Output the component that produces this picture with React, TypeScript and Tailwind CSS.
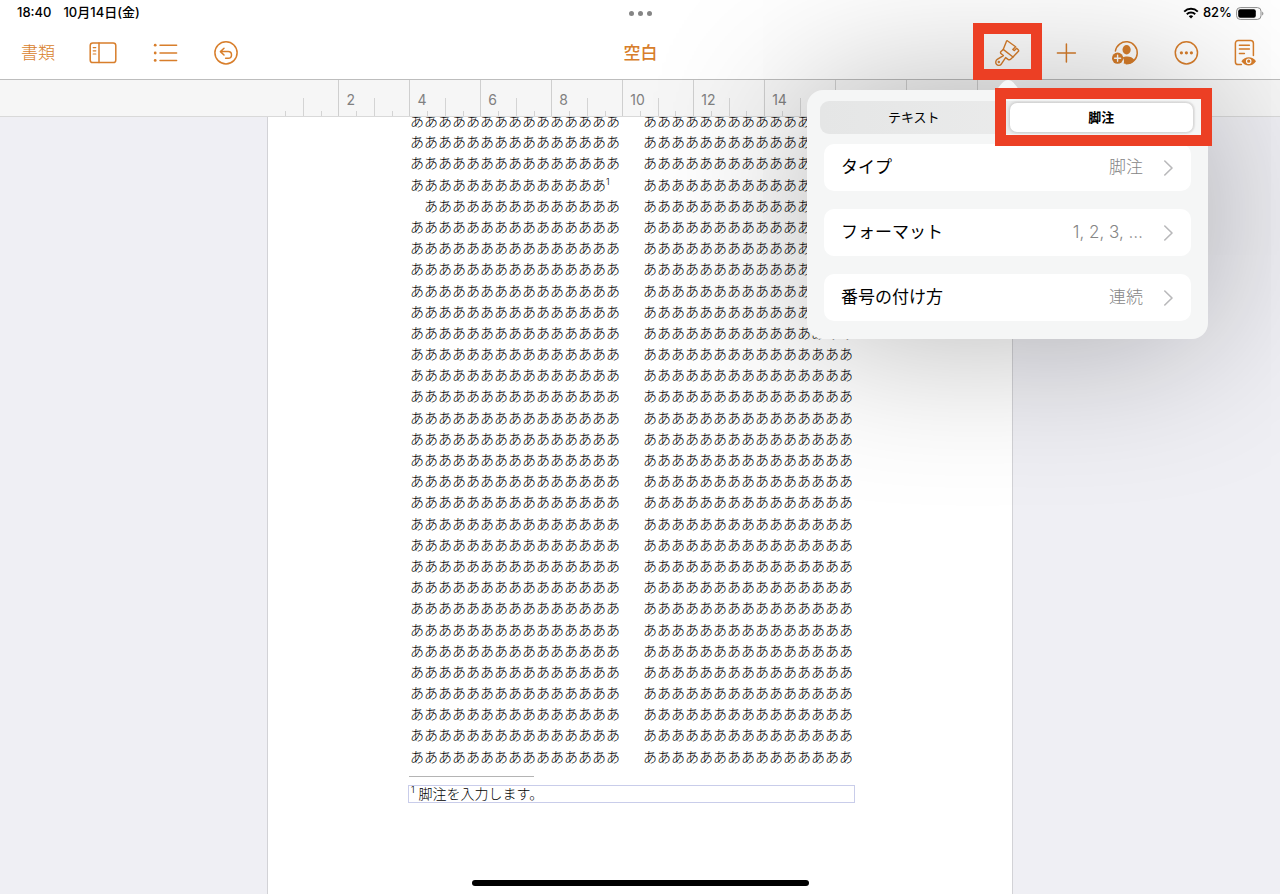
import { useState } from "react";
import type { ReactNode } from "react";

const CHAR = "あ";
const ROWS = 31;
const NOTE_ROW = 3;
const TICKS = Array.from({ length: 42 }, (_, i) => i);

function ToolButton({ label, children }: { label: string; children: ReactNode }) {
  return (
    <button type="button" aria-label={label} className="flex h-7 w-7 items-center justify-center">
      {children}
    </button>
  );
}

const line = {
  fill: "none",
  stroke: "currentColor",
  strokeWidth: 1.5,
  strokeLinecap: "round" as const,
  strokeLinejoin: "round" as const,
};

function SidebarIcon() {
  return (
    <svg viewBox="0 0 28 28" className="h-7 w-7" {...line}>
      <rect x="1.2" y="4" width="25.6" height="19.6" rx="2.6" />
      <path d="M10 4v19.6" />
      <path d="M4.2 8.6h2.6M4.2 11.8h2.6M4.2 15h2.6" strokeWidth="1.2" />
    </svg>
  );
}

function ListIcon() {
  return (
    <svg viewBox="0 0 28 28" className="h-7 w-7" {...line}>
      <path d="M9 6.2h16.6M9 14h16.6M9 21.4h16.6" />
      <g fill="currentColor" stroke="none">
        <circle cx="4.2" cy="6.2" r="1.4" />
        <circle cx="4.2" cy="14" r="1.4" />
        <circle cx="4.2" cy="21.4" r="1.4" />
      </g>
    </svg>
  );
}

function UndoIcon() {
  return (
    <svg viewBox="0 0 28 28" className="h-7 w-7" {...line}>
      <circle cx="13" cy="13.8" r="11.1" />
      <path d="M11 9.2L7.4 12.6L11 16M7.8 12.6h7.4a3.3 3.3 0 0 1 0 6.6h-2.6" />
    </svg>
  );
}

function BrushIcon() {
  return (
    <svg viewBox="0 0 28 28" className="h-7 w-7" {...line} strokeWidth="1.4">
      <path d="M16 2.2C15.4 1.6 14.8 1.6 14.4 2.4L11.2 10.4L21 18L26.2 12.6C26.8 12 26.8 11.4 26.2 10.8L24.6 9.2L22.4 11.6L20.8 10.4L23.6 7.8Z" />
      <path d="M11.2 10.4L9 12.4C8.2 13.2 8.4 14.2 9.2 14.8L11.4 16.6L5.6 20.2C3.6 21.4 3.2 23.6 4.4 25.2C6 27 8.6 26.6 9.6 24.6L13.6 18.6L16 20.4C17 21 17.8 21 18.6 20.2L21 18" />
      <circle cx="6.8" cy="23" r="0.5" fill="currentColor" />
    </svg>
  );
}

function PlusIcon() {
  return (
    <svg viewBox="0 0 28 28" className="h-7 w-7" {...line}>
      <path d="M14.4 5v18M5.4 14h18" />
    </svg>
  );
}

function CollaborateIcon() {
  return (
    <svg viewBox="0 0 28 28" className="h-7 w-7" {...line}>
      <path d="M3.4 12A11 11 0 1 1 14.2 24.8" />
      <g fill="currentColor" stroke="none">
        <ellipse cx="14.6" cy="10.8" rx="4.1" ry="4.7" />
        <path d="M11.6 24.6C12.6 22.4 11.8 19.8 10.6 18.4C12.6 17.2 17 17 19.2 18.2C20.8 19 22 20 22.6 21.4A11 11 0 0 1 11.6 24.6Z" />
        <circle cx="5.6" cy="19.2" r="5.6" />
      </g>
      <path d="M5.6 16.2v6M2.6 19.2h6" stroke="#fff" strokeWidth="1.4" />
    </svg>
  );
}

function MoreIcon() {
  return (
    <svg viewBox="0 0 28 28" className="h-7 w-7" {...line}>
      <circle cx="14.4" cy="13.8" r="11.1" />
      <g fill="currentColor" stroke="none">
        <circle cx="9.4" cy="13.8" r="1.6" />
        <circle cx="14.4" cy="13.8" r="1.6" />
        <circle cx="19.4" cy="13.8" r="1.6" />
      </g>
    </svg>
  );
}

function ReadingIcon() {
  return (
    <svg viewBox="0 0 28 28" className="h-7 w-7" {...line}>
      <path d="M9.4 25.6H6.2C4.6 25.6 3.4 24.6 3.4 23V4.2C3.4 2.6 4.6 1.4 6.2 1.4h12.4c1.6 0 2.8 1.2 2.8 2.8v12.4" />
      <path d="M7.4 6.2h10M7.4 10h10M7.4 14.4h5" />
      <path
        d="M9.4 22.2C13 16.8 20.6 16.8 24 22.2C20.6 27.8 13 27.8 9.4 22.2Z"
        fill="currentColor"
        stroke="none"
      />
      <circle cx="16.7" cy="22.2" r="2.2" fill="currentColor" stroke="#fff" strokeWidth="1.2" />
    </svg>
  );
}

function StatusBar() {
  return (
    <div className="grid h-[26px] grid-cols-[1fr_auto_1fr] items-center px-4 text-[13px] font-medium text-black">
      <div className="flex gap-3 pl-px">
        <span>18:40</span>
        <span>10月14日(金)</span>
      </div>
      <div className="flex gap-1">
        <span className="h-[5px] w-[5px] rounded-full bg-[#858585]" />
        <span className="h-[5px] w-[5px] rounded-full bg-[#858585]" />
        <span className="h-[5px] w-[5px] rounded-full bg-[#858585]" />
      </div>
      <div className="flex items-center justify-end gap-1">
        <svg viewBox="0 0 16 12" className="h-3 w-4" fill="none" stroke="#000" strokeWidth="2">
          <path d="M1.2 4.6a9.8 9.8 0 0 1 13.6 0M3.8 7.3a6 6 0 0 1 8.4 0" />
          <path d="M5.8 9.2a3.2 3.2 0 0 1 4.4 0L8 11.6Z" fill="#000" stroke="none" />
        </svg>
        <span>82%</span>
        <svg viewBox="0 0 28 13" className="h-[13px] w-7">
          <rect x="0.6" y="0.6" width="24.4" height="11.8" rx="3.6" fill="none" stroke="#8c8c8c" />
          <rect x="2.2" y="2.2" width="17.6" height="8.6" rx="2" fill="#000" />
          <path d="M26.2 4.4c1.6.8 1.6 3.4 0 4.2Z" fill="#8c8c8c" />
        </svg>
      </div>
    </div>
  );
}

function Toolbar() {
  return (
    <div className="grid h-[53px] grid-cols-[1fr_auto_1fr] items-center pr-5 pl-[21px] text-[17px] leading-6 text-[#d87e2b]">
      <div className="flex items-center gap-[34px]">
        <button type="button" className="font-light">
          書類
        </button>
        <ToolButton label="表示">
          <SidebarIcon />
        </ToolButton>
        <ToolButton label="目次">
          <ListIcon />
        </ToolButton>
        <ToolButton label="取り消す">
          <UndoIcon />
        </ToolButton>
      </div>
      <h1 className="font-medium">空白</h1>
      <div className="flex items-center justify-end gap-8">
        <ToolButton label="フォーマット設定">
          <BrushIcon />
        </ToolButton>
        <ToolButton label="挿入">
          <PlusIcon />
        </ToolButton>
        <ToolButton label="共同制作">
          <CollaborateIcon />
        </ToolButton>
        <ToolButton label="その他">
          <MoreIcon />
        </ToolButton>
        <ToolButton label="読み上げ表示">
          <ReadingIcon />
        </ToolButton>
      </div>
    </div>
  );
}

function Ruler() {
  return (
    <div className="h-[37px] border-b border-[#d9d9d9] bg-[#f6f6f6]">
      <div className="mx-auto grid h-full w-[745px] grid-cols-[repeat(42,1fr)] items-end">
        {TICKS.map((i) => {
          if (i === 0) return <span key={i} />;
          if (i % 4 === 0)
            return (
              <span
                key={i}
                className="flex h-full items-center border-l border-[#cfcfcf] pt-1 pl-[7px] text-sm leading-5 text-[#808080]"
              >
                {i <= 28 && <span className="w-0">{i / 2}</span>}
              </span>
            );
          if (i % 2 === 0) return <span key={i} className="h-[18px] border-l border-[#d4d4d4]" />;
          return <span key={i} className="h-[5px] border-l border-[#d4d4d4]" />;
        })}
      </div>
    </div>
  );
}

function Column({ withNote }: { withNote?: boolean }) {
  return (
    <div className="flex h-[657px] w-[210px] flex-col justify-between">
      {Array.from({ length: ROWS }, (_, i) => {
        const isNote = withNote && i === NOTE_ROW;
        const indent = withNote && i === NOTE_ROW + 1;
        return (
          <p key={i} className={indent ? "pl-[14px] whitespace-nowrap" : "whitespace-nowrap"}>
            {CHAR.repeat(isNote || indent ? 14 : 15)}
            {isNote && <sup className="text-[9px] leading-none">1</sup>}
          </p>
        );
      })}
    </div>
  );
}

function DocumentPage() {
  return (
    <main className="flex flex-1 justify-center overflow-hidden bg-[#efeff4]">
      <article className="w-[746px] border-x border-[#d2d2d6] bg-white pl-[142px] text-sm leading-[21px] font-light text-black">
        <div className="-mt-[7px] flex gap-[23px]">
          <Column withNote />
          <Column />
        </div>
        <div className="mt-[9px] -ml-px h-px w-[125px] bg-[#b4b4b4]" />
        <div className="mt-2 -ml-[2px] flex h-[18px] w-[447px] items-center gap-1 border border-[#c9cdea] pl-[2px] leading-4">
          <sup className="text-[9px] leading-none">1</sup>
          <p>脚注を入力します。</p>
        </div>
      </article>
    </main>
  );
}

const SETTINGS = [
  { name: "タイプ", value: "脚注" },
  { name: "フォーマット", value: "1, 2, 3, …" },
  { name: "番号の付け方", value: "連続" },
];

function FormatPopover() {
  const [tab, setTab] = useState("脚注");
  return (
    <section
      aria-label="フォーマット"
      className="absolute top-[90px] right-[72px] w-[401px] rounded-2xl bg-[#f5f6f6] pt-[11px] pb-[18px] shadow-[0_0_160px_0_rgba(0,0,0,0.3)]"
    >
      <svg viewBox="0 0 30 12" className="absolute -top-[11px] left-[186px] h-3 w-[30px]" fill="#f5f6f6">
        <path d="M0 12C6 12 8 1 15 1S24 12 30 12Z" />
      </svg>
      <div className="mx-[13px] grid grid-cols-2 gap-1 rounded-[9px] bg-linear-to-r from-[#e5e6e6] to-[#efefef] p-[2px] text-[13px] leading-5">
        {["テキスト", "脚注"].map((name) => (
          <button
            key={name}
            type="button"
            aria-pressed={tab === name}
            onClick={() => setTab(name)}
            className={
              tab === name
                ? "h-[29px] rounded-[7px] bg-white pb-[2px] font-bold shadow-[0_0_3px_1px_rgba(0,0,0,0.14)]"
                : "h-[29px] rounded-[7px] pb-[2px]"
            }
          >
            {name}
          </button>
        ))}
      </div>
      <div className="mt-[10px] flex flex-col gap-[18px] px-[17px]">
        {SETTINGS.map((s) => (
          <button
            key={s.name}
            type="button"
            className="flex h-[47px] items-center rounded-[10px] bg-white pr-[18px] pl-[17px] text-[17px] leading-6"
          >
            <span className="pb-[2px]">{s.name}</span>
            <span className="ml-auto pb-px font-light text-[#858585]">{s.value}</span>
            <svg
              viewBox="0 0 10 16"
              className="ml-5 h-4 w-[10px]"
              fill="none"
              stroke="#b8b8ba"
              strokeWidth="1.6"
              strokeLinecap="round"
              strokeLinejoin="round"
            >
              <path d="M1.8 1L9 8L1.8 15" />
            </svg>
          </button>
        ))}
      </div>
    </section>
  );
}

export default function App() {
  return (
    <div className="relative flex min-h-screen flex-col overflow-hidden bg-white font-['Inter','Noto_Sans_CJK_JP',sans-serif] antialiased">
      <header className="border-b border-[#bdbdbd]">
        <StatusBar />
        <Toolbar />
      </header>
      <Ruler />
      <DocumentPage />
      <FormatPopover />
      <div className="pointer-events-none absolute top-[23px] right-[238px] h-[57px] w-[69px] border-[11px] border-[#ec3f24]" />
      <div className="pointer-events-none absolute top-[88px] right-[68px] h-[58px] w-[217px] border-[11px] border-[#ec3f24]" />
      <div className="pointer-events-none absolute inset-x-0 bottom-2 flex justify-center">
        <div className="h-[6px] w-[337px] rounded-full bg-black" />
      </div>
    </div>
  );
}
